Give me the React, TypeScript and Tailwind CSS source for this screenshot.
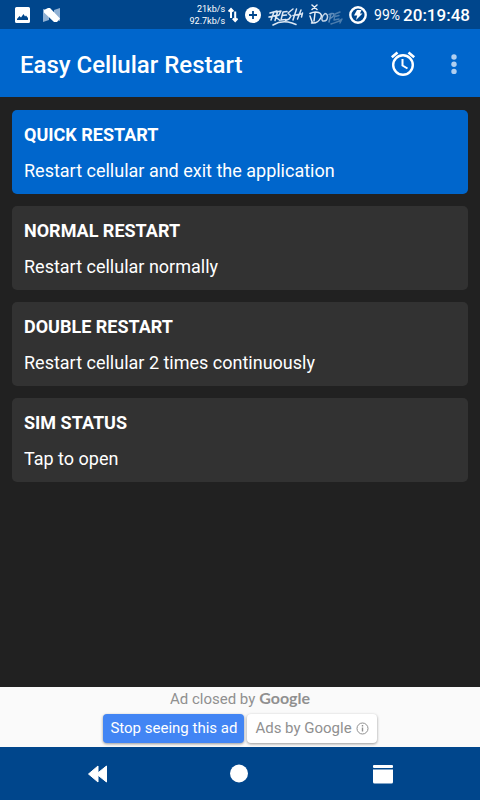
import React from "react";

type Action = { title: string; detail: string; primary?: boolean };

const actions: Action[] = [
  { title: "QUICK RESTART", detail: "Restart cellular and exit the application", primary: true },
  { title: "NORMAL RESTART", detail: "Restart cellular normally" },
  { title: "DOUBLE RESTART", detail: "Restart cellular 2 times continuously" },
  { title: "SIM STATUS", detail: "Tap to open" },
];

function PictureIcon() {
  return (
    <svg width="16" height="16" viewBox="0 0 16 16" aria-hidden="true">
      <path fill="#fff" fillRule="evenodd" d="M1.500 0h12A1.500 1.500 0 0 1 15 1.500v13a1.500 1.500 0 0 1-1.500 1.500h-12A1.500 1.500 0 0 1 0 14.500v-13A1.500 1.500 0 0 1 1.500 0zM2 13h11v-2l-2-2.500-1 1L8.500 7 6 10.500 4.500 9 2 12z" />
    </svg>
  );
}

function NougatIcon() {
  return (
    <svg width="18" height="16" viewBox="0 0 18 16" aria-hidden="true">
      <path fill="#8fb0d3" d="M0 2l6 2v9l-6 2zM11 3l6-2v13l-6-2z" />
      <path fill="#fff" d="M1 3l4-2h2l10 10.500-3 3.500h-3L1 5.500z" />
    </svg>
  );
}

function TransferIcon() {
  return (
    <svg width="10" height="16" viewBox="0 0 10 16" aria-hidden="true">
      <path fill="none" stroke="#fff" strokeWidth="2" d="M3 11V2M.6 4.500L3 2l2.400 2.500M7.200 4.500v9.500M4.800 11.500L7.200 14l2.400-2.500" />
    </svg>
  );
}

function PlusIcon() {
  return (
    <svg width="16" height="16" viewBox="0 0 16 16" aria-hidden="true">
      <circle cx="8" cy="8" r="8" fill="#fff" />
      <path stroke="#00468c" strokeWidth="1.800" d="M8 4v8M4 8h8" />
    </svg>
  );
}

function FreshTag() {
  return (
    <svg width="36" height="22" viewBox="0 0 36 22" fill="none" stroke="#dde8f4" strokeWidth="1.500" strokeLinecap="round" strokeLinejoin="round" aria-hidden="true">
      <path d="M2 9l7-2M6 8L3 16M1 13l7-1.500" />
      <path d="M8 8l5-1-2 4-4 1.500 5 4M9.500 8L7 16.500" />
      <path d="M19 7.500l-4 .5-2 8 5-.5M14 11.500l4.500-.5" />
      <path d="M25 5l-5 4 3 3-2 3-3.500 1.500" />
      <path d="M28.500 5l-3.500 11M33 6l-3.500 9M25 11.500l8-1.500M34.500 9l-1 4" />
      <path d="M5 21c5-3 12-4 19-2l4 1.500" />
    </svg>
  );
}

function DopeTag() {
  return (
    <svg width="34" height="22" viewBox="0 0 34 22" fill="none" strokeLinecap="round" strokeLinejoin="round" aria-hidden="true">
      <path stroke="#e6eef7" strokeWidth="1.500" d="M3 1l5 4.500M8 1L3 5.500M6 9L5 17M1 9.500c6-3 13-1 11 4-2 4-6 6-9.500 5.500M1 12l2.500 7" />
      <path stroke="#c0d2e6" strokeWidth="1.500" d="M16 9.500c-4 3-4 8-1 7.500 4 0 5-7 1-7.500" />
      <path stroke="#5f8cba" strokeWidth="1.500" d="M22 9.500l-2 8.500M20 10.500c6-3 7 1 1 4" />
      <path stroke="#4b7dae" strokeWidth="1.400" d="M31 8l-5 2-1 6 5-1M26 12.500l4-1M22 20c5-2 8-2 11-5l-2 4" />
    </svg>
  );
}

function BatteryIcon() {
  return (
    <svg width="18" height="18" viewBox="0 0 18 18" aria-hidden="true">
      <circle cx="9" cy="9" r="7.700" fill="none" stroke="#fff" strokeWidth="2.400" />
      <path fill="#fff" d="M8 4h4.500l-1.500 3.500h2.500L7 14l1.200-4.500H5z" />
    </svg>
  );
}

function StatusBar() {
  return (
    <div className="flex h-[29px] items-center bg-[#00468c] pl-[15px] pr-[10px] pt-px">
      <div className="flex flex-1 items-center gap-3">
        <PictureIcon />
        <NougatIcon />
      </div>
      <div className="flex items-center">
        <div className="mr-[3px] text-right text-[9px] leading-[12px]">
          <div>21kb/s</div>
          <div>92.7kb/s</div>
        </div>
        <TransferIcon />
        <div className="mx-[7px]"><PlusIcon /></div>
        <FreshTag />
        <div className="ml-[5px] mr-[6px]"><DopeTag /></div>
        <BatteryIcon />
        <span className="ml-[7px] text-[14px] leading-5">99%</span>
        <span className="ml-[3px] text-[17px] font-medium leading-5">20:19:48</span>
      </div>
    </div>
  );
}

function AppBar() {
  return (
    <header className="flex h-[68px] items-center bg-[#0066cc] pl-5 pr-[17px] pt-[3px]">
      <h1 className="flex-1 text-2xl font-medium">Easy Cellular Restart</h1>
      <button type="button" aria-label="Schedule" className="mr-7">
        <svg width="28" height="28" viewBox="0 0 28 28" fill="none" stroke="#fff" aria-hidden="true">
          <circle cx="14" cy="14" r="9.800" strokeWidth="2.400" />
          <path strokeWidth="2" d="M13.500 8v6.500l5 3" />
          <path strokeWidth="2.600" d="M2.800 6.300L8.500 1.500M25.200 6.300L19.500 1.500" />
        </svg>
      </button>
      <button type="button" aria-label="More options">
        <svg width="18" height="28" viewBox="0 0 18 28" fill="#b0cff0" aria-hidden="true">
          <circle cx="9" cy="6" r="2.700" />
          <circle cx="9" cy="13.200" r="2.700" />
          <circle cx="9" cy="20.400" r="2.700" />
        </svg>
      </button>
    </header>
  );
}

function ActionCard({ title, detail, primary }: Action) {
  return (
    <button
      type="button"
      className={
        primary
          ? "block h-[84px] w-full rounded-[5px] bg-[#0066cc] px-3 pt-0.5 text-left text-lg leading-6"
          : "block h-[84px] w-full rounded-[5px] bg-[#323232] px-3 pt-0.5 text-left text-lg leading-6"
      }
    >
      <span className="block font-bold">{title}</span>
      <span className="mt-3 block">{detail}</span>
    </button>
  );
}

function AdBanner() {
  return (
    <aside className="h-[60px] bg-[#fafafa] text-[15px] text-[#909090]">
      <p className="flex h-[23px] items-baseline justify-center gap-1 leading-[22px]">
        <span>Ad closed by</span>
        <span className="font-['Lato'] text-base font-bold leading-[22px]">Google</span>
      </p>
      <div className="mt-1 flex justify-center gap-[3px]">
        <button type="button" className="h-[29px] rounded-sm bg-[#4285f4] px-[7px] text-white shadow-[0_1px_3px_rgba(0,0,0,0.4)]">
          Stop seeing this ad
        </button>
        <button type="button" className="flex h-[29px] items-center gap-1 rounded-sm bg-white px-2 shadow-[0_1px_3px_rgba(0,0,0,0.4)]">
          Ads by Google
          <svg width="13" height="13" viewBox="0 0 13 13" fill="none" stroke="#909090" aria-hidden="true">
            <circle cx="6.500" cy="6.500" r="5.500" />
            <path strokeWidth="1.400" d="M6.500 5.500v4M6.500 3v1.400" />
          </svg>
        </button>
      </div>
    </aside>
  );
}

function NavBar() {
  return (
    <nav className="flex h-[53px] items-center justify-between bg-[#00468c] px-[86px]">
      <button type="button" aria-label="Back">
        <svg width="22" height="18" viewBox="0 0 22 18" fill="#fff" stroke="#fff" strokeLinejoin="round" aria-hidden="true">
          <path d="M2.500 9L12 1v16zM10.500 9L20.500 1v16z" />
        </svg>
      </button>
      <button type="button" aria-label="Home">
        <svg width="20" height="20" viewBox="0 0 20 20" aria-hidden="true">
          <circle cx="9" cy="9.500" r="9" fill="#fff" />
        </svg>
      </button>
      <button type="button" aria-label="Recent apps">
        <svg width="22" height="20" viewBox="0 0 22 20" fill="#fff" aria-hidden="true">
          <rect x="1" y="1" width="20" height="3" rx="1" />
          <path d="M1 5.500h20V18a1.500 1.500 0 0 1-1.500 1.500h-17A1.500 1.500 0 0 1 1 18z" />
        </svg>
      </button>
    </nav>
  );
}

export default function App() {
  return (
    <div className="flex min-h-screen flex-col bg-[#212121] font-['Roboto',sans-serif] text-white">
      <StatusBar />
      <AppBar />
      <main className="flex flex-1 flex-col gap-3 px-3 pb-3 pt-[13px]">
        {actions.map((action) => (
          <ActionCard key={action.title} {...action} />
        ))}
      </main>
      <AdBanner />
      <NavBar />
    </div>
  );
}
